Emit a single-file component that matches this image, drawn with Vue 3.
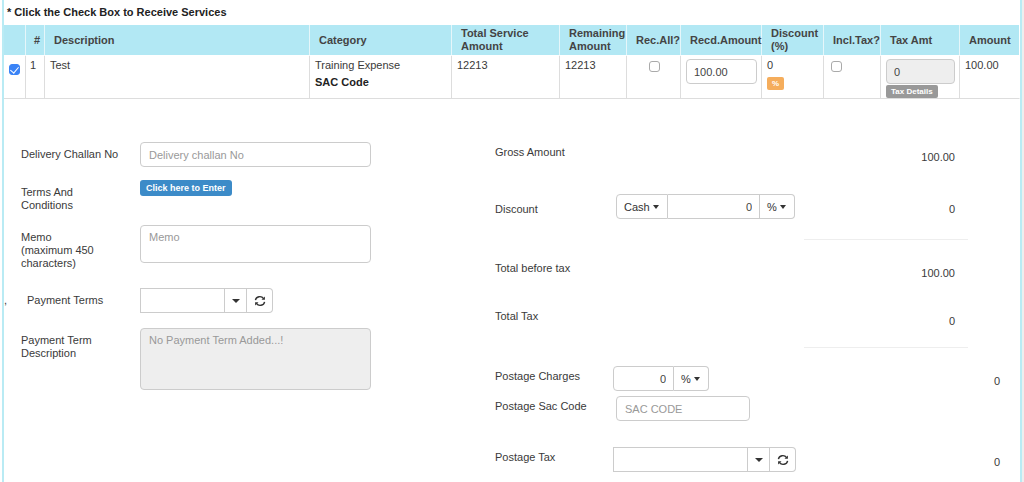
<script setup>
import { ref } from 'vue'

const selected = ref(true)
const receiveAll = ref(false)
const inclusiveTax = ref(false)
const received = ref('100.00')
const taxAmount = ref('0')
const challan = ref('')
const memo = ref('')
const paymentTerm = ref('')
const discount = ref('0')
const postage = ref('0')
const sacCode = ref('')
const postageTax = ref('')
</script>

<template>
  <main class="page">
    <h1 class="title">* Click the Check Box to Receive Services</h1>

    <table class="services">
      <colgroup>
        <col class="w-check"><col class="w-num"><col><col class="w-cat"><col class="w-total"><col class="w-remain">
        <col class="w-all"><col class="w-recd"><col class="w-disc"><col class="w-incl"><col class="w-tax"><col class="w-amount">
      </colgroup>
      <thead>
        <tr>
          <th></th>
          <th>#</th>
          <th>Description</th>
          <th>Category</th>
          <th>Total Service Amount</th>
          <th>Remaining Amount</th>
          <th>Rec.All?</th>
          <th>Recd.Amount</th>
          <th>Discount (%)</th>
          <th>Incl.Tax?</th>
          <th>Tax Amt</th>
          <th>Amount</th>
        </tr>
      </thead>
      <tbody>
        <tr>
          <td><input v-model="selected" class="check" type="checkbox" aria-label="Receive service"></td>
          <td>1</td>
          <td>Test</td>
          <td>Training Expense<br><strong>SAC Code</strong></td>
          <td>12213</td>
          <td>12213</td>
          <td class="middle"><input v-model="receiveAll" class="check" type="checkbox" aria-label="Receive all"></td>
          <td><input v-model="received" class="control cell-input" type="text" aria-label="Received amount"></td>
          <td>0<button class="tag orange" type="button">%</button></td>
          <td class="inclusive"><input v-model="inclusiveTax" class="check" type="checkbox" aria-label="Inclusive of tax"></td>
          <td>
            <input v-model="taxAmount" class="control cell-input" type="text" readonly aria-label="Tax amount">
            <button class="tag gray" type="button">Tax Details</button>
          </td>
          <td>100.00</td>
        </tr>
      </tbody>
    </table>

    <form class="panels" @submit.prevent>
      <section class="details">
        <div class="field">
          <label for="challan">Delivery Challan No</label>
          <input id="challan" v-model="challan" class="control" type="text" placeholder="Delivery challan No">
        </div>
        <div class="field">
          <label for="terms">Terms And Conditions</label>
          <div><button id="terms" class="enter" type="button">Click here to Enter</button></div>
        </div>
        <div class="field">
          <label for="memo">Memo<br>(maximum 450 characters)</label>
          <textarea id="memo" v-model="memo" class="control memo" placeholder="Memo"></textarea>
        </div>
        <div class="field combo-field">
          <div class="lead"><span>,</span><label for="payment">Payment Terms</label></div>
          <div class="combo">
            <input id="payment" v-model="paymentTerm" class="term-input" type="text">
            <button class="arrow" type="button" aria-label="Show payment terms"><i class="caret"></i></button>
            <button class="refresh" type="button" aria-label="Refresh payment terms">
              <svg viewBox="0 0 12 12"><path d="M1.4 5.2A4.5 4.3 0 0 1 9.6 3.6M10.6 6.8A4.5 4.3 0 0 1 2.4 8.4" /><path class="head" d="M10.9 1.4V4.8H7.5ZM1.1 10.6V7.2H4.5Z" /></svg>
            </button>
          </div>
        </div>
        <div class="field">
          <label for="term-text">Payment Term Description</label>
          <textarea id="term-text" class="control term-text" readonly placeholder="No Payment Term Added...!"></textarea>
        </div>
      </section>

      <section class="totals">
        <div class="line">
          <span class="name">Gross Amount</span>
          <output class="sum">100.00</output>
        </div>
        <div class="line level">
          <label class="name" for="discount">Discount</label>
          <div class="group inset">
            <button class="mode" type="button">Cash <i class="caret"></i></button>
            <input id="discount" v-model="discount" class="discount-input" type="text">
            <button class="unit" type="button">% <i class="caret"></i></button>
          </div>
          <output class="sum">0</output>
        </div>
        <hr class="rule">
        <div class="line">
          <span class="name">Total before tax</span>
          <output class="sum">100.00</output>
        </div>
        <div class="line tax">
          <span class="name">Total Tax</span>
          <output class="sum">0</output>
        </div>
        <hr class="rule near">
        <div class="line">
          <label class="name" for="postage">Postage Charges</label>
          <div class="group">
            <input id="postage" v-model="postage" class="postage-input" type="text">
            <button class="unit" type="button">% <i class="caret"></i></button>
          </div>
          <output class="extra">0</output>
        </div>
        <div class="line sac">
          <label class="name" for="sac">Postage Sac Code</label>
          <div class="inset"><input id="sac" v-model="sacCode" class="control sac-input" type="text" placeholder="SAC CODE"></div>
        </div>
        <div class="line postage-tax">
          <label class="name" for="postage-tax">Postage Tax</label>
          <div class="combo">
            <input id="postage-tax" v-model="postageTax" class="tax-input" type="text">
            <button class="arrow" type="button" aria-label="Show postage taxes"><i class="caret"></i></button>
            <button class="refresh" type="button" aria-label="Refresh postage taxes">
              <svg viewBox="0 0 12 12"><path d="M1.4 5.2A4.5 4.3 0 0 1 9.6 3.6M10.6 6.8A4.5 4.3 0 0 1 2.4 8.4" /><path class="head" d="M10.9 1.4V4.8H7.5ZM1.1 10.6V7.2H4.5Z" /></svg>
            </button>
          </div>
          <output class="extra">0</output>
        </div>
      </section>
    </form>
  </main>
</template>

<style>
body {
  margin: 0;
  padding: 0 2px;
  background: linear-gradient(to right, #fff 50%, #eee 50%);
}
</style>

<style scoped>
.page,
.page * {
  box-sizing: border-box;
}
.page {
  min-height: 100vh;
  border: solid #b9ebf4;
  border-width: 0 2px;
  background: #fff;
  color: #3a3a3a;
  font: 11px/13px "Liberation Sans", Arial, sans-serif;
}
.page input,
.page button,
.page textarea {
  font-family: inherit;
  font-size: 11px;
  margin: 0;
}
.title {
  margin: 0;
  padding: 6px 0 6px 3px;
  color: #222;
  font-size: 11px;
  line-height: 13px;
  font-weight: bold;
}

/* Service table */
.services {
  width: 100%;
  table-layout: fixed;
  border-collapse: separate;
  border-spacing: 0;
}
.w-check { width: 22px; }
.w-num { width: 19px; }
.w-cat { width: 142px; }
.w-total { width: 108px; }
.w-remain { width: 67px; }
.w-all { width: 54px; }
.w-recd { width: 81px; }
.w-disc { width: 62px; }
.w-incl { width: 57px; }
.w-tax { width: 79px; }
.w-amount { width: 60px; }
.services th {
  height: 31px;
  padding: 2px 0 2px 9px;
  border-right: 1px solid #e6f6fa;
  border-bottom: 1px solid #fff;
  background: #b2e8f4;
  color: #444;
  text-align: left;
  vertical-align: middle;
}
.services th:nth-child(2) { padding-left: 8px; }
.services td {
  height: 43px;
  padding: 1px 4px 0 5px;
  border-right: 1px solid #ddd;
  border-bottom: 1px solid #ddd;
  line-height: 17px;
  vertical-align: top;
}
.services strong { color: #222; }
.services td:last-child,
.services th:last-child { border-right-color: #fff; }
.services td:nth-child(2) { padding-left: 4px; }
.services td.middle { text-align: center; }
.services td.inclusive { padding-left: 7px; }
.check {
  appearance: none;
  display: inline-grid;
  place-items: center;
  width: 11px;
  height: 11px;
  border: 1px solid #aaa;
  border-radius: 3px;
  background: #fff;
  vertical-align: -4px;
}
.services .check:not(:checked) { vertical-align: -3px; }
.check:checked {
  border-color: #3a83f6;
  background: #3a83f6;
}
.check:checked::after {
  content: "";
  width: 4px;
  height: 7px;
  margin-bottom: 2px;
  border: solid #fff;
  border-width: 0 1px 1px 0;
  transform: rotate(40deg);
}
.control {
  display: block;
  width: 100%;
  height: 25px;
  padding: 0 8px;
  border: 1px solid #ccc;
  border-radius: 4px;
  background: #fff;
  color: #444;
  outline: 0;
}
.control::placeholder { color: #999; }
.control[readonly] { background: #eee; }
.services .cell-input {
  margin-top: 2px;
  padding: 0 7px;
}
.tag {
  display: block;
  height: 13px;
  padding: 0 5px;
  border: 0;
  border-radius: 2px;
  color: #fff;
  font-weight: bold;
  line-height: 13px;
}
.page .tag { font-size: 8px; }
.page .tag.orange { margin-top: 3px; background: #f5ad5c; }
.page .tag.gray { margin-top: 1px; background: #999; }

/* Form panels */
.panels {
  display: grid;
  grid-template-columns: 491fr 525fr;
  padding-top: 43px;
}
.details {
  display: flex;
  flex-direction: column;
  gap: 13px;
  padding-right: 124px;
}
.field {
  display: grid;
  grid-template-columns: 119px minmax(0, 1fr);
  align-items: start;
  padding-left: 17px;
}
.field label {
  padding: 6px 20px 0 0;
}
.field:first-child label { padding-right: 0; }
.combo-field {
  grid-template-columns: 136px minmax(0, 1fr);
  padding: 5px 0 2px;
}
.lead { display: flex; }
.lead span {
  width: 23px;
  padding-top: 6px;
}
.lead label { padding-right: 0; }
textarea.control {
  padding: 4px 8px;
  line-height: 14px;
  resize: none;
  overflow: hidden;
}
.memo { height: 38px; }
.term-text { height: 62px; }
.enter {
  display: block;
  height: 16px;
  padding: 0 6px;
  border: 0;
  border-radius: 3px;
  background: #3c8bc8;
  color: #fff;
  font-weight: bold;
  line-height: 16px;
}
.page .enter { font-size: 9px; }

/* Joined controls */
.combo,
.group { display: flex; }
.combo > *,
.group > * {
  height: 25px;
  border: 1px solid #ccc;
  background: #fff;
  color: #333;
  outline: 0;
}
.combo > * + *,
.group > * + * { border-left: 0; }
.combo input { padding: 0 8px; }
.group input {
  padding: 0 7px;
  color: #444;
  text-align: right;
}
.group > :first-child { border-radius: 4px 0 0 4px; }
.group > :last-child { border-radius: 0 4px 4px 0; }
.group button {
  display: flex;
  align-items: center;
  gap: 3px;
  padding: 0 7px;
}
.group .mode { width: 52px; }
.group .unit { width: 35px; }
.caret {
  border: solid transparent;
  border-width: 4px 4px 0;
  border-top-color: #333;
}
.group .caret { border-width: 4px 3px 0; }
.arrow,
.refresh {
  display: grid;
  place-items: center;
  padding: 0;
}
.arrow { width: 22px; }
.refresh {
  width: 26px;
  border-radius: 0 4px 4px 0;
}
.refresh svg {
  width: 12px;
  height: 12px;
  fill: none;
  stroke: #333;
  stroke-width: 1.4;
}
.refresh .head {
  fill: #333;
  stroke: none;
}
.term-input { width: 85px; }
.discount-input { width: 92px; }
.postage-input { width: 61px; }
.tax-input { width: 135px; }
.sac-input { width: 134px; }
.inset { margin-left: 3px; }

/* Totals */
.line {
  display: grid;
  grid-template-columns: 118px minmax(0, 1fr) 164px 52px;
  min-height: 25px;
  align-items: start;
}
.name {
  grid-column: 1;
  padding-top: 4px;
}
.sum,
.extra {
  padding-top: 9px;
  text-align: right;
}
.sum {
  grid-column: 3;
  padding-right: 13px;
}
.extra {
  grid-column: 4;
  padding-right: 20px;
}
.level { margin-top: 27px; }
.level .name { padding-top: 9px; }
.tax { margin-top: 23px; }
.sac { margin-top: 5px; }
.postage-tax { margin-top: 26px; }
.rule {
  width: 164px;
  height: 1px;
  margin: 20px 52px 18px auto;
  border: 0;
  background: #eee;
}
.rule.near { margin-top: 16px; }
</style>
